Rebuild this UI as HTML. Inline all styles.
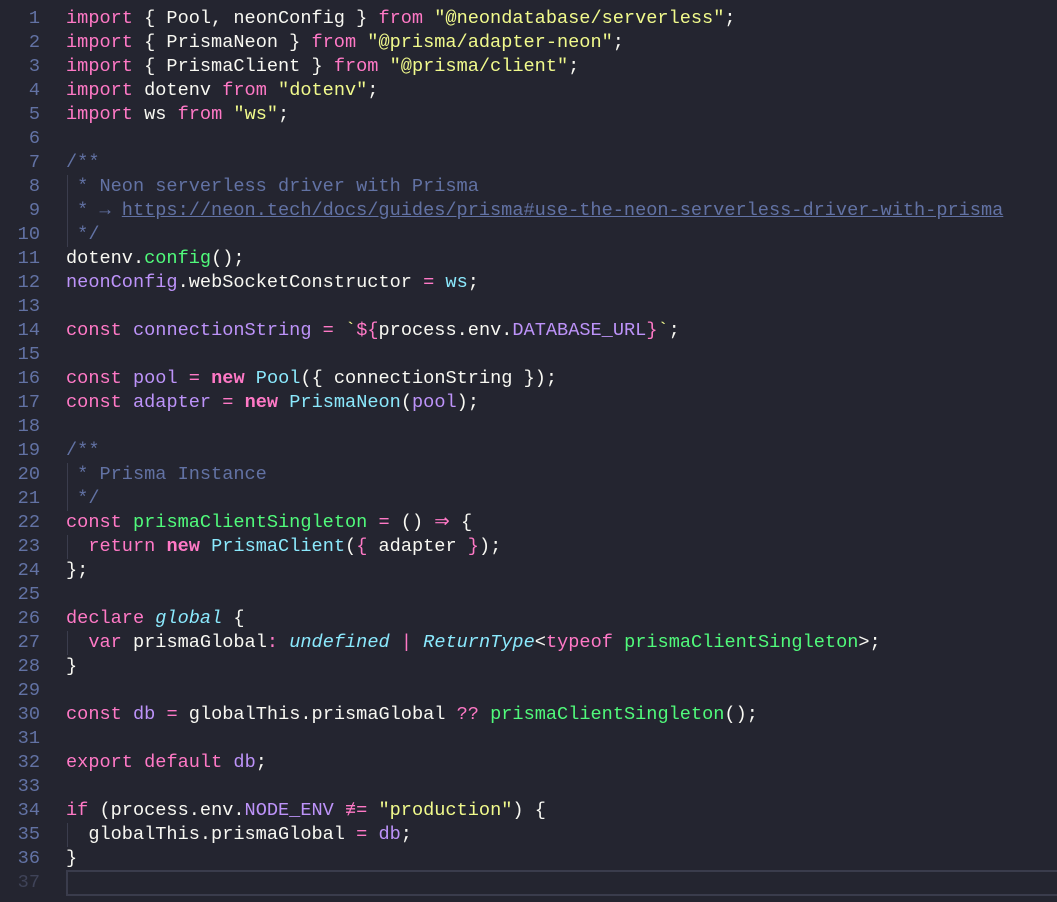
<!DOCTYPE html>
<html><head><meta charset="utf-8"><style>
html,body{margin:0;padding:0;background:#242530;width:1057px;height:902px;overflow:hidden}
.ed{position:absolute;left:0;top:7px;font-family:"Liberation Mono",monospace;font-size:18.6px;color:#f8f8f2}
.l{height:24px;line-height:24px;white-space:pre;position:relative}
.n{display:inline-block;width:40px;text-align:right;color:#6272a4;margin-right:26px}
.k{color:#ff79c6}.b{color:#ff79c6;font-weight:bold}.s{color:#f1fa8c}.g{color:#50fa7b}.c{color:#8be9fd}.p{color:#bd93f9}.cm{color:#6272a4}.i{font-style:italic;color:#8be9fd}.o{color:#ffb86c}
.u{text-decoration:underline}
.gd{position:absolute;left:67px;top:0;width:1px;height:24px;background:#3b3d4d}
.cur{position:absolute;left:66px;top:870px;width:990px;height:22px;border:2px solid #3a3c4c}
.top{position:absolute;left:0;top:0;width:170px;height:3px;color:#6272a4;font:10px "Liberation Sans",sans-serif;overflow:hidden}
</style></head><body>
<div class="cur"></div>
<div class="ed">
<div class="l"><span class="n">1</span><span class="k">import</span> { Pool, neonConfig } <span class="k">from</span> <span class="s">"@neondatabase/serverless"</span>;</div>
<div class="l"><span class="n">2</span><span class="k">import</span> { PrismaNeon } <span class="k">from</span> <span class="s">"@prisma/adapter-neon"</span>;</div>
<div class="l"><span class="n">3</span><span class="k">import</span> { PrismaClient } <span class="k">from</span> <span class="s">"@prisma/client"</span>;</div>
<div class="l"><span class="n">4</span><span class="k">import</span> dotenv <span class="k">from</span> <span class="s">"dotenv"</span>;</div>
<div class="l"><span class="n">5</span><span class="k">import</span> ws <span class="k">from</span> <span class="s">"ws"</span>;</div>
<div class="l"><span class="n">6</span></div>
<div class="l"><span class="n">7</span><span class="cm">/**</span></div>
<div class="l"><span class="gd"></span><span class="n">8</span><span class="cm"> * Neon serverless driver with Prisma</span></div>
<div class="l"><span class="gd"></span><span class="n">9</span><span class="cm"> * → <span class="u">https://neon.tech/docs/guides/prisma#use-the-neon-serverless-driver-with-prisma</span></span></div>
<div class="l"><span class="gd"></span><span class="n">10</span><span class="cm"> */</span></div>
<div class="l"><span class="n">11</span>dotenv.<span class="g">config</span>();</div>
<div class="l"><span class="n">12</span><span class="p">neonConfig</span>.webSocketConstructor <span class="k">=</span> <span class="c">ws</span>;</div>
<div class="l"><span class="n">13</span></div>
<div class="l"><span class="n">14</span><span class="k">const</span> <span class="p">connectionString</span> <span class="k">=</span> <span class="s">`</span><span class="k">${</span>process.env.<span class="p">DATABASE_URL</span><span class="k">}</span><span class="s">`</span>;</div>
<div class="l"><span class="n">15</span></div>
<div class="l"><span class="n">16</span><span class="k">const</span> <span class="p">pool</span> <span class="k">=</span> <span class="b">new</span> <span class="c">Pool</span>({ connectionString });</div>
<div class="l"><span class="n">17</span><span class="k">const</span> <span class="p">adapter</span> <span class="k">=</span> <span class="b">new</span> <span class="c">PrismaNeon</span>(<span class="p">pool</span>);</div>
<div class="l"><span class="n">18</span></div>
<div class="l"><span class="n">19</span><span class="cm">/**</span></div>
<div class="l"><span class="gd"></span><span class="n">20</span><span class="cm"> * Prisma Instance</span></div>
<div class="l"><span class="gd"></span><span class="n">21</span><span class="cm"> */</span></div>
<div class="l"><span class="n">22</span><span class="k">const</span> <span class="g">prismaClientSingleton</span> <span class="k">=</span> () <span class="k">⇒</span> {</div>
<div class="l"><span class="gd"></span><span class="n">23</span>  <span class="k">return</span> <span class="b">new</span> <span class="c">PrismaClient</span>(<span class="k">{</span> adapter <span class="k">}</span>);</div>
<div class="l"><span class="n">24</span>};</div>
<div class="l"><span class="n">25</span></div>
<div class="l"><span class="n">26</span><span class="k">declare</span> <span class="i">global</span> {</div>
<div class="l"><span class="gd"></span><span class="n">27</span>  <span class="k">var</span> prismaGlobal<span class="k">:</span> <span class="i">undefined</span> <span class="k">|</span> <span class="i">ReturnType</span>&lt;<span class="k">typeof</span> <span class="g">prismaClientSingleton</span>&gt;;</div>
<div class="l"><span class="n">28</span>}</div>
<div class="l"><span class="n">29</span></div>
<div class="l"><span class="n">30</span><span class="k">const</span> <span class="p">db</span> <span class="k">=</span> globalThis.prismaGlobal <span class="k">??</span> <span class="g">prismaClientSingleton</span>();</div>
<div class="l"><span class="n">31</span></div>
<div class="l"><span class="n">32</span><span class="k">export</span> <span class="k">default</span> <span class="p">db</span>;</div>
<div class="l"><span class="n">33</span></div>
<div class="l"><span class="n">34</span><span class="k">if</span> (process.env.<span class="p">NODE_ENV</span> <span class="k">≢=</span> <span class="s">"production"</span>) {</div>
<div class="l"><span class="gd"></span><span class="n">35</span>  globalThis.prismaGlobal <span class="k">=</span> <span class="p">db</span>;</div>
<div class="l"><span class="n">36</span>}</div>
<div class="l"><span class="n" style="color:#3f4358">37</span></div>
</div>
</body></html>
